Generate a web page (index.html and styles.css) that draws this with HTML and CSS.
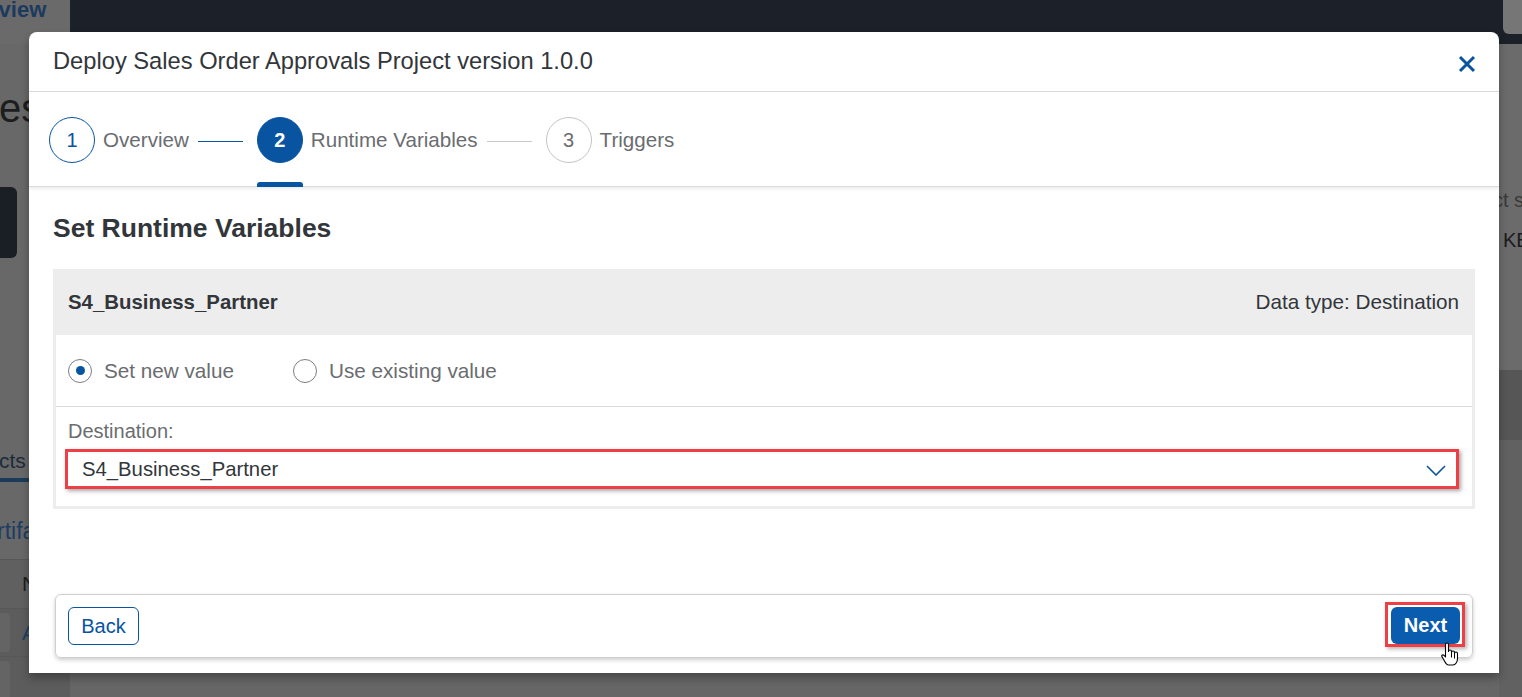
FILE: index.html
```html
<!DOCTYPE html>
<html lang="en">
<head>
<meta charset="utf-8">
<title>Deploy Sales Order Approvals Project</title>
<link rel="stylesheet" href="styles.css">
</head>
<body>
<div class="page">
  <header class="shell">
    <div class="shell-tab">rview</div>
    <div class="shell-bar"></div>
    <div class="shell-btn">E</div>
  </header>
  <div class="page-body">
    <div class="left-col">
      <div class="l-title">es</div>
      <div class="l-button"></div>
      <div class="l-tab">cts (</div>
      <div class="l-underline"></div>
      <div class="l-link">rtifa</div>
      <div class="l-table">
        <div class="l-row l-row-head"><span>N</span></div>
        <div class="l-row"><i class="l-chip"></i><span class="l-blue">A</span></div>
        <div class="l-row"><i class="l-chip"></i></div>
      </div>
    </div>
    <div class="center-col"></div>
    <div class="right-col">
      <div class="r-top">
        <div class="r-text r-text1">ct s</div>
        <div class="r-text r-text2">KE</div>
      </div>
      <div class="r-band"></div>
      <div class="r-bottom"></div>
    </div>
  </div>
</div>

<div class="dialog">
  <div class="dlg-header">
    <h1 class="dlg-title">Deploy Sales Order Approvals Project version 1.0.0</h1>
    <svg class="close" width="18" height="18" viewBox="0 0 18 18"><path d="M2 2 L16 16 M16 2 L2 16" stroke="#0854a0" stroke-width="3" fill="none"/></svg>
  </div>
  <div class="steps">
    <div class="step">
      <span class="step-circle done">1</span>
      <span class="step-label">Overview</span>
    </div>
    <span class="step-line blue"></span>
    <div class="step active">
      <span class="step-circle current">2</span>
      <span class="step-label">Runtime Variables</span>
    </div>
    <span class="step-line"></span>
    <div class="step">
      <span class="step-circle">3</span>
      <span class="step-label">Triggers</span>
    </div>
  </div>
  <div class="dlg-content">
    <h2 class="section-title">Set Runtime Variables</h2>
    <div class="panel">
      <div class="panel-head">
        <span class="var-name">S4_Business_Partner</span>
        <span class="var-type">Data type: Destination</span>
      </div>
      <div class="panel-body">
        <div class="radio-row">
          <label class="radio"><span class="radio-dot checked"></span>Set new value</label>
          <label class="radio"><span class="radio-dot"></span>Use existing value</label>
        </div>
        <div class="dest">
          <div class="dest-label">Destination:</div>
          <div class="select">
            <span class="select-value">S4_Business_Partner</span>
            <svg class="chev" width="20" height="11" viewBox="0 0 20 11"><path d="M1 1 L10 10 L19 1" stroke="#0854a0" stroke-width="1.6" fill="none"/></svg>
          </div>
        </div>
      </div>
    </div>
  </div>
  <div class="dlg-footer">
    <button class="btn btn-ghost">Back</button>
    <div class="highlight">
      <button class="btn btn-primary">Next</button>
    </div>
  </div>
</div>

<svg class="cursor" width="20" height="26" viewBox="0 0 20 26">
  <path d="M4.5 2.5 a1.5 1.5 0 0 1 3 0 v7 a1.5 1.5 0 0 1 3 0 v1 a1.5 1.5 0 0 1 3 0 v1 a1.5 1.5 0 0 1 3 0 v5 c0 3.5 -2 6.5 -4.5 6.5 h-4.5 c-2 0 -3 -2 -4 -4 l-2.6 -4.6 c-0.6 -1.1 1 -2.2 2.1 -1.1 l1.5 1.6 z" fill="#fff" stroke="#000" stroke-width="1.1" stroke-linejoin="round"/>
  <path d="M10.5 11 v4.5 M13.5 12 v4.5" stroke="#000" stroke-width="1"/>
</svg>
</body>
</html>
```

FILE: styles.css
```css
* { box-sizing: border-box; }
html, body { margin: 0; padding: 0; }
body {
  width: 1522px;
  height: 697px;
  overflow: hidden;
  font-family: "Liberation Sans", Arial, sans-serif;
  background: #5e5e5e;
  position: relative;
}

/* ---------- dimmed page behind the dialog ---------- */
.page {
  width: 1522px;
  height: 697px;
  display: flex;
  flex-direction: column;
}
.shell {
  height: 44px;
  display: flex;
  flex: none;
}
.shell-tab {
  width: 70px;
  background: #6a6a6a;
  color: #1c3a5e;
  font-weight: bold;
  font-size: 22px;
  line-height: 22px;
  margin-top: -1px;
  text-indent: -10px;
  white-space: nowrap;
  overflow: hidden;
}
.shell-bar {
  flex: 1;
  background: #1b2029;
}
.shell-btn {
  width: 23px;
  background: #1b2029;
  color: #2a2a2a;
  font-size: 20px;
  line-height: 34px;
  text-indent: 17px;
  overflow: hidden;
  position: relative;
}
.shell-btn::before {
  content: "";
  position: absolute;
  left: 4px;
  top: 0;
  right: 0;
  height: 34px;
  background: #767676;
  border-radius: 0 0 0 6px;
  z-index: 0;
}
.page-body {
  flex: 1;
  display: flex;
}
.left-col {
  width: 70px;
  background: #686868;
  display: flex;
  flex-direction: column;
  overflow: hidden;
}
.l-title {
  margin-top: 41px;
  font-size: 40px;
  line-height: 46px;
  color: #1d1d1d;
  text-indent: -1px;
}
.l-button {
  margin-top: 56px;
  width: 17px;
  height: 71px;
  background: #1a1e25;
  border-radius: 0 6px 6px 0;
}
.l-tab {
  margin-top: 191px;
  font-size: 21px;
  line-height: 24px;
  color: #1d2b3b;
  white-space: nowrap;
  text-indent: -1px;
}
.l-underline {
  margin-top: 5px;
  height: 4px;
  background: #1c3a5c;
}
.l-link {
  margin-top: 36px;
  font-size: 23px;
  line-height: 26px;
  color: #1d3d64;
  white-space: nowrap;
  text-indent: -3px;
}
.l-table {
  margin-top: 15px;
  flex: 1;
  background: #5c5c5c;
  border-top: 1px solid #575757;
}
.l-row {
  height: 48px;
  display: flex;
  align-items: center;
  border-bottom: 1px solid #575757;
  font-size: 21px;
  color: #1e1e1e;
  position: relative;
  padding-left: 22px;
}
.l-row-head { height: 49px; background: #606060; }
.l-chip {
  position: absolute;
  left: 0;
  top: 4px;
  bottom: 4px;
  width: 10px;
  background: #646464;
  border-radius: 0 4px 4px 0;
}
.l-blue { color: #1d3d64; }
.center-col { flex: 1; background: #666; }
.right-col {
  width: 23px;
  display: flex;
  flex-direction: column;
  overflow: hidden;
}
.r-top {
  height: 326px;
  background: #6b6b6b;
}
.r-text {
  font-size: 20px;
  line-height: 24px;
  white-space: nowrap;
  color: #2a2a2a;
}
.r-text1 { margin-top: 144px; text-indent: -6px; color: #3a3a3a; }
.r-text2 { margin-top: 16px; color: #1b1b1b; text-indent: 4px; }
.r-band { height: 70px; background: #565656; }
.r-bottom { flex: 1; background: #616161; }

/* ---------- dialog ---------- */
.dialog {
  position: absolute;
  left: 29px;
  top: 32px;
  width: 1470px;
  height: 641px;
  background: #fff;
  border-radius: 8px 8px 0 0;
  display: flex;
  flex-direction: column;
  box-shadow: 0 5px 8px rgba(0, 0, 0, 0.3);
}
.dlg-header {
  height: 60px;
  flex: none;
  border-bottom: 1px solid #d9d9d9;
  display: flex;
  align-items: center;
  justify-content: space-between;
  padding: 0 23px 0 24px;
}
.dlg-title {
  margin: 0;
  font-weight: normal;
  font-size: 23.7px;
  color: #32363a;
}
.close { margin-top: 4px; }

.steps {
  height: 95px;
  flex: none;
  display: flex;
  align-items: center;
  padding-left: 20px;
  border-bottom: 1px solid #dcdcdc;
  box-shadow: 0 2px 3px rgba(0, 0, 0, 0.08);
  position: relative;
  z-index: 1;
}
.step {
  display: flex;
  align-items: center;
  gap: 8px;
  height: 100%;
  position: relative;
}
.step.active::after {
  content: "";
  position: absolute;
  left: 0;
  bottom: -1px;
  width: 46px;
  height: 5px;
  background: #0854a0;
  border-radius: 3px 3px 0 0;
}
.step-circle {
  width: 46px;
  height: 46px;
  border-radius: 50%;
  border: 1px solid #c4c4c4;
  display: flex;
  align-items: center;
  justify-content: center;
  font-size: 20px;
  color: #6a6d70;
  margin-top: 2px;
}
.step-circle.done {
  border-color: #0854a0;
  color: #0854a0;
}
.step-circle.current {
  background: #0854a0;
  border-color: #0854a0;
  color: #fff;
  font-weight: bold;
}
.step-label {
  font-size: 20.6px;
  color: #6a6d70;
  margin-top: 2px;
}
.step-line {
  width: 45px;
  height: 1px;
  background: #c8c8c8;
  margin: 4px 14px 0 9px;
}
.step-line.blue { background: #0854a0; }

.dlg-content {
  flex: 1;
  padding: 0 24px;
}
.section-title {
  margin: 26px 0 26px;
  font-size: 26.5px;
  line-height: 30px;
  font-weight: bold;
  color: #32363a;
}
.panel-head {
  height: 66px;
  background: #ededed;
  display: flex;
  align-items: center;
  justify-content: space-between;
  padding: 0 16px 0 15px;
}
.var-name {
  font-weight: bold;
  font-size: 20.4px;
  color: #32363a;
}
.var-type {
  font-size: 20.7px;
  color: #32363a;
}
.panel-body {
  border: 3px solid #ededed;
  border-top: none;
}
.radio-row {
  height: 72px;
  border-bottom: 1px solid #d9d9d9;
  display: flex;
  align-items: center;
  gap: 59px;
  padding-left: 12px;
}
.radio {
  display: flex;
  align-items: center;
  gap: 12px;
  font-size: 20.7px;
  color: #6a6d70;
}
.radio-dot {
  width: 24px;
  height: 24px;
  border-radius: 50%;
  border: 1px solid #7a7e82;
  display: flex;
  align-items: center;
  justify-content: center;
}
.radio-dot.checked::after {
  content: "";
  width: 9px;
  height: 9px;
  border-radius: 50%;
  background: #0854a0;
}
.dest {
  padding: 12px 13px 17px 12px;
}
.dest-label {
  font-size: 20px;
  line-height: 24px;
  color: #6a6d70;
}
.select {
  margin-top: 6px;
  margin-left: -3px;
  height: 40px;
  border: 3px solid #ee3f46;
  box-shadow: 2px 2px 4px rgba(0, 0, 0, 0.35);
  display: flex;
  align-items: center;
  justify-content: space-between;
  padding: 0 10px 0 14px;
}
.select-value {
  font-size: 20.3px;
  color: #32363a;
}
.chev { margin-top: 2px; }

.dlg-footer {
  flex: none;
  height: 64px;
  margin: 0 26px 15px;
  border: 1px solid #cfcfcf;
  border-radius: 6px;
  box-shadow: 0 2px 4px rgba(0, 0, 0, 0.2);
  display: flex;
  align-items: center;
  justify-content: space-between;
  padding: 0 12px;
}
.btn {
  font-family: "Liberation Sans", Arial, sans-serif;
  font-size: 20px;
  border-radius: 6px;
  cursor: pointer;
}
.btn-ghost {
  width: 71px;
  height: 38px;
  background: #fff;
  border: 1px solid #0854a0;
  color: #0854a0;
  padding: 0;
}
.highlight {
  margin-right: -5px;
  margin-top: -3px;
  border: 3px solid #ee3f46;
  padding: 2px 2px 0 3px;
  box-shadow: 2px 2px 4px rgba(0, 0, 0, 0.3);
}
.btn-primary {
  display: block;
  width: 69px;
  height: 37px;
  background: #0a5cae;
  border: none;
  color: #fff;
  font-weight: bold;
  padding: 0;
}

.cursor {
  position: absolute;
  left: 1441px;
  top: 642px;
}
```
